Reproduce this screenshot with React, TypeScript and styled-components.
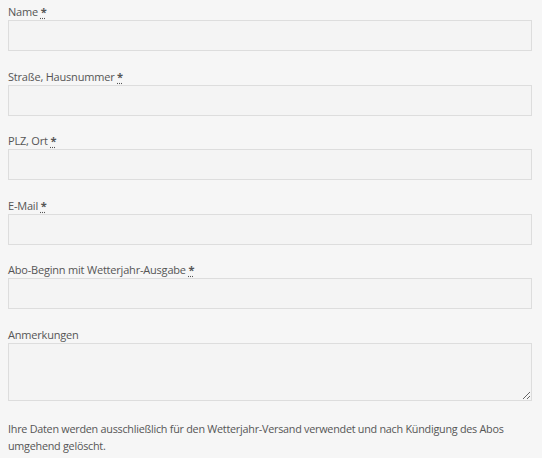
import { type FC } from 'react'
import styled, { createGlobalStyle } from 'styled-components'

const GlobalStyle = createGlobalStyle`
  html, body {
    margin: 0;
    padding: 0;
    background: #f6f6f6;
  }
  body {
    font-family: 'Open Sans', 'DejaVu Sans', sans-serif;
    color: #555;
  }
`

const fields = [
  { label: 'Name', required: true },
  { label: 'Straße, Hausnummer', required: true },
  { label: 'PLZ, Ort', required: true },
  { label: 'E-Mail', required: true },
  { label: 'Abo-Beginn mit Wetterjahr-Ausgabe', required: true }
]

const App: FC = () => {
  return (
    <>
      <GlobalStyle />
      <Form>
        {fields.map((f) => (
          <Field key={f.label}>
            <Label>
              {f.label} {f.required && <Req title="Pflichtfeld">*</Req>}
            </Label>
            <Input type="text" />
          </Field>
        ))}
        <Field>
          <Label>Anmerkungen</Label>
          <TextArea />
        </Field>
        <Note>
          Ihre Daten werden ausschließlich für den Wetterjahr-Versand verwendet und nach Kündigung des Abos
          umgehend gelöscht.
        </Note>
      </Form>
    </>
  )
}

const Form = styled.form`
  display: flex;
  flex-direction: column;
  gap: 16.6px;
  padding: 3px 10px 0 8px;
`

const Field = styled.div`
  display: flex;
  flex-direction: column;
`

const Label = styled.label`
  font-size: 11px;
  line-height: 17px;
  height: 17px;
  letter-spacing: -0.2px;
  color: #555;
`

const Req = styled.abbr`
  font-weight: bold;
  text-decoration: underline dotted;
  text-underline-offset: 2px;
  cursor: help;
`

const boxStyle = `
  box-sizing: border-box;
  width: 100%;
  margin: 0;
  background: #f4f4f4;
  border: 1px solid #dddddd;
  border-radius: 0;
  font-family: inherit;
  font-size: 12px;
  color: #555;
  outline: none;
`

const Input = styled.input`
  ${boxStyle}
  height: 31px;
  padding: 4px 8px;
`

const TextArea = styled.textarea`
  ${boxStyle}
  height: 58px;
  padding: 4px 8px;
  display: block;
  resize: vertical;
`

const Note = styled.p`
  margin: 2px 0 0;
  font-size: 10.8px;
  line-height: 17px;
  letter-spacing: -0.25px;
  color: #555;
`

export default App
